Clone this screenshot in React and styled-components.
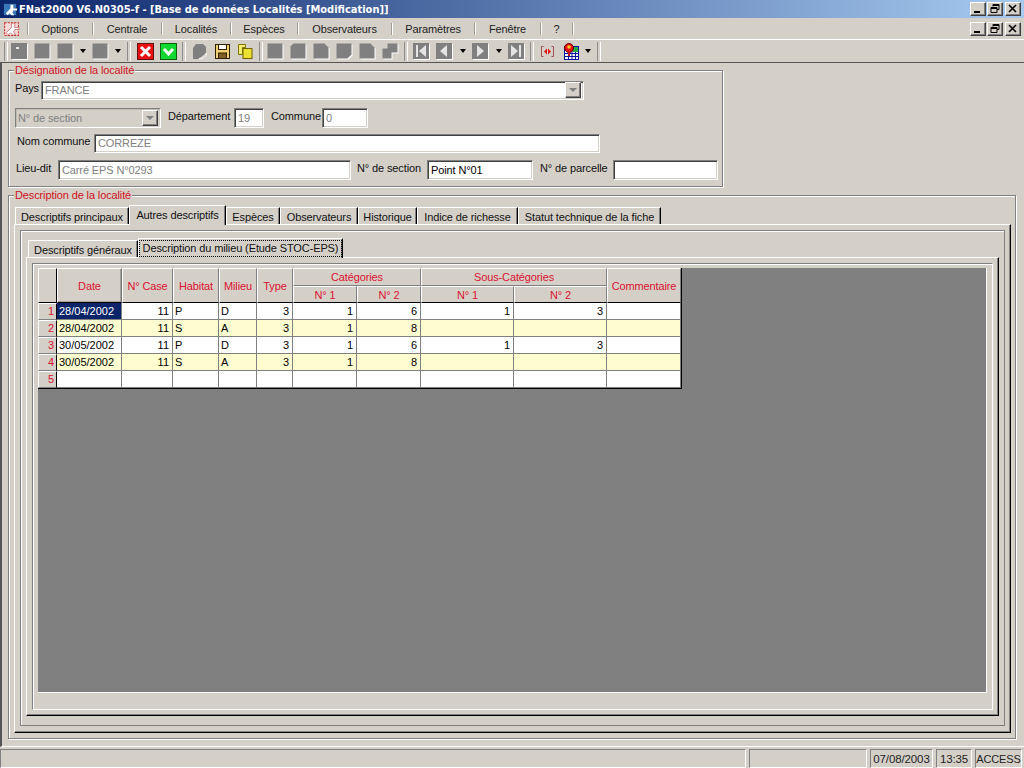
import React from 'react';
import styled, { createGlobalStyle } from 'styled-components';

const Global = createGlobalStyle`
  html, body { margin: 0; padding: 0; background: #d4d0c8; }
  * { box-sizing: border-box; }
  body { font-family: "Liberation Sans", Arial, sans-serif; font-size: 11px; letter-spacing: -0.12px; color: #000; }
`;
const Page = styled.div`width:1024px;height:768px;display:flex;flex-direction:column;overflow:hidden;background:#d4d0c8;`;
const TitleBar = styled.div`height:18px;display:flex;align-items:center;padding:0 3px 0 3px;background:linear-gradient(90deg,#0a246a,#a6caf0);color:#fff;font:bold 11px "DejaVu Sans Condensed","DejaVu Sans",sans-serif;letter-spacing:0;`;
const TitleText = styled.span`flex:1;margin-left:1px;white-space:nowrap;`;
const WinBtns = styled.div`display:flex;gap:1px;`;
const WinBtn = styled.button`width:16px;height:14px;padding:0;margin-left:${p=>p.$close?'1px':'0'};display:flex;align-items:center;justify-content:center;background:#d4d0c8;border:1px solid;border-color:#fff #404040 #404040 #fff;box-shadow:inset -1px -1px 0 #808080;`;
const MenuBar = styled.div`height:21px;display:flex;align-items:center;padding:0 3px 0 3px;`;
const MenuLogo = styled.div`width:25px;height:18px;display:flex;align-items:center;`;
const MenuItem = styled.div`width:${p=>p.$w}px;height:12px;display:flex;align-items:center;justify-content:center;padding-right:2px;border-left:1px solid #fff;box-shadow:-1px 0 0 #a09c94;font-size:11px;color:#222;white-space:nowrap;`;
const MenuFill = styled.div`flex:1;`;
const Toolbar = styled.div`height:24px;display:flex;align-items:center;padding-left:3px;border-top:1px solid #fff;border-bottom:1px solid #555;`;
const Grip = styled.div`width:5px;height:18px;display:flex;justify-content:center;`;
const Sep = styled.div`width:${p=>p.$w}px;height:19px;display:flex;justify-content:center;&::after{content:"";width:2px;height:100%;border-left:1px solid #8c8c8c;border-right:1px solid #fff;}`;
const Tool = styled.div`width:${p=>p.$w||23}px;height:20px;display:flex;align-items:center;justify-content:center;flex:none;`;
const Caret = styled.div`width:0;height:0;border-left:3.5px solid transparent;border-right:3.5px solid transparent;border-top:4px solid #000;`;
const Main = styled.div`flex:1;display:flex;flex-direction:column;gap:8px;padding:7px 8px 7px 6px;border-left:2px solid #555;border-bottom:1px solid #fff;min-height:0;`;
const Group = styled.section`position:relative;flex:${p=>p.$grow?1:'none'};width:${p=>p.$w}px;height:${p=>p.$h?p.$h+'px':'auto'};min-height:0;display:flex;flex-direction:column;padding:${p=>p.$pad};border:1px solid #808080;box-shadow:inset 1px 1px 0 #fff,1px 1px 0 #fff;`;
const Legend = styled.div`position:absolute;left:5px;top:-7px;padding:0 1px;background:#d4d0c8;color:#d01020;font-size:11px;line-height:13px;`;
const Row = styled.div`display:flex;align-items:center;height:${p=>p.$h||20}px;margin-top:${p=>p.$mt||0}px;padding-left:${p=>p.$pl||0}px;`;
const Label = styled.span`width:${p=>p.$w}px;flex:none;margin-left:${p=>p.$ml||0}px;padding-bottom:5px;white-space:nowrap;color:#111;`;
const InputBox = styled.div`width:${p=>p.$w}px;height:100%;flex:none;display:flex;align-items:center;padding:0 0 1px ${p=>p.$flat?2:3}px;background:${p=>p.$flat?'#d4d0c8':'#fff'};border:1px solid;border-color:#808080 #fff #fff #808080;box-shadow:${p=>p.$flat?'inset 1px 1px 0 #c0bcb4':'inset 1px 1px 0 #404040,inset -1px -1px 0 #d4d0c8'};color:${p=>p.$on?'#000':'#808080'};white-space:nowrap;`;
const InputText = styled.span`flex:1;`;
const Drop = styled.div`width:16px;height:16px;margin:0 2px 0 0;display:flex;align-items:center;justify-content:center;background:#d4d0c8;border:1px solid;border-color:#fff #404040 #404040 #fff;box-shadow:inset -1px -1px 0 #808080;&::after{content:"";border-left:4px solid transparent;border-right:4px solid transparent;border-top:4px solid #808080;}`;
const Tabs = styled.div`display:flex;align-items:flex-end;height:19px;padding-left:${p=>p.$pl||0}px;flex:none;`;
const Tab = styled.div`position:relative;z-index:${p=>p.$on?2:0};width:${p=>p.$w}px;flex:none;height:${p=>p.$on?20:17}px;display:flex;align-items:center;justify-content:center;margin-bottom:${p=>p.$on?-1:0}px;padding:${p=>p.$on?'0 0 1px':'1px 0 0'};background:#d4d0c8;border-top:1px solid #fff;border-left:1px solid #fff;border-right:1px solid #000;box-shadow:inset -1px 0 0 #808080;white-space:nowrap;color:#111;`;
const Focus = styled.span`width:100%;height:17px;display:flex;align-items:center;justify-content:center;outline:1px dotted #000;outline-offset:-1px;`;
const Panel = styled.div`position:relative;flex:1;min-height:0;display:flex;flex-direction:column;padding:${p=>p.$pad};background:#d4d0c8;border:1px solid;border-color:#fff #000 #000 #fff;box-shadow:inset -1px -1px 0 #808080;`;
const Frame = styled.div`flex:1;min-height:0;display:flex;flex-direction:column;padding:${p=>p.$pad};border:1px solid;border-color:#808080 ${p=>p.$light?'#fff #fff':'#808080 #808080'} #808080;box-shadow:inset 1px 1px 0 #fff;`;
const GridArea = styled.div`flex:1;min-height:0;background:#808080;border-right:1px solid #fff;border-bottom:1px solid #fff;`;
const Table = styled.table`width:644px;table-layout:fixed;border-collapse:separate;border-spacing:0;font-size:11px;border-right:1px solid #000;border-bottom:1px solid #000;`;
const Head = styled.th`height:${p=>p.$h||18}px;padding:0;font-weight:normal;color:#dc1030;background:#d4d0c8;border:1px solid;border-color:#fff #808080 ${p=>p.$last?'#000':'#808080'} #fff;`;
const DateHead = styled(Head)`border-color:#fff #707070 #000 #fff;box-shadow:inset -1px -1px 0 #a8a49c;`;
const Corner = styled.th`padding:0;background:#d4d0c8;border:1px solid;border-color:#fff #000 #000 #fff;`;
const RowNum = styled.th`height:17px;padding:0 2px 1px 0;text-align:right;font-weight:normal;color:#dc1030;background:#d4d0c8;border:1px solid;border-color:#fff #000 #808080 #fff;`;
const Cell = styled.td`height:17px;padding:0 ${p=>p.$right?'3px':'2px'} 1px;text-align:${p=>p.$right?'right':'left'};letter-spacing:0;color:${p=>p.$sel?'#fff':'#000'};background:${p=>p.$sel?'#0a246a':p.$alt?'#fdfdd0':'#fff'};border-right:1px solid #808080;border-bottom:1px solid #808080;overflow:hidden;white-space:nowrap;`;
const StatusBar = styled.div`height:21px;display:flex;align-items:stretch;padding:2px 2px 0 0;gap:3px;`;
const StatusCell = styled.div`width:${p=>p.$w?p.$w+'px':'auto'};flex:${p=>p.$w?'none':1};display:flex;align-items:center;justify-content:center;font-size:${p=>p.$fs||11.5}px;border:1px solid;border-color:#808080 #fff #fff #808080;color:#222;`;

const Logo = ({ blue }) => (
  <svg width={blue ? 15 : 17} height={blue ? 15 : 17} viewBox="0 0 16 16">
    {blue ? <rect x="1" y="2" width="13" height="12" fill="#3a79b8" /> : <rect x="1.5" y="2.5" width="13" height="12" fill="#f4d8d8" stroke="#c83030" strokeDasharray="2 1" />}
    <path d="M3 12 8 7V3h3v4h4v2h-4l-1 2 2 3H9l-2-2-2 2z" fill="#fff" stroke={blue ? 'none' : '#b03030'} strokeWidth=".5" />
  </svg>
);
const WinIcon = ({ t }) => (
  <svg width="10" height="10" viewBox="0 0 10 10">
    {t === 'min' && <rect x="1" y="7" width="6" height="2" fill="#000" />}
    {t === 'res' && <path d="M3 .5h6v5H7M3 .5v2M3 1.5h6M1 3.5h6v5H1zM1 4.5h6" fill="none" stroke="#000" />}
    {t === 'x' && <path d="M1 1l7 7M8 1L1 8" stroke="#000" strokeWidth="1.6" />}
  </svg>
);
const gray = '#808080';
const Shape = ({ d = 'M0 0h15v15H0z' }) => (
  <svg width="17" height="17" viewBox="-.5 -.5 17 17">
    <path d={d} fill="#fff" transform="translate(1 1)" />
    <path d={d} fill={gray} />
  </svg>
);
const Dot = () => (
  <svg width="17" height="17" viewBox="0 0 17 17"><rect x="1" y="1" width="16" height="16" fill="#fff"/><rect width="16" height="16" fill={gray}/><rect x="5" y="4" width="3" height="2" fill="#e8e8e8"/></svg>
);
const RedX = () => (
  <svg width="17" height="17" viewBox="0 0 17 17"><rect x=".5" y=".5" width="16" height="16" fill="#e81010" stroke="#601010"/><path d="M4 4l9 9M13 4l-9 9" stroke="#fff" strokeWidth="3"/></svg>
);
const GreenV = () => (
  <svg width="17" height="17" viewBox="0 0 17 17"><rect x=".5" y=".5" width="16" height="16" fill="#10d830" stroke="#106010"/><path d="M4 6l4.500 5L13 6" fill="none" stroke="#fff" strokeWidth="3"/></svg>
);
const Blob = () => (
  <svg width="17" height="17" viewBox="0 0 17 17"><path d="M2 5l3-4h7l3 3v6l-5 4-3 2H2z" fill={gray}/><path d="M15 10c1 3-3 6-7 6" stroke="#fff" fill="none"/></svg>
);
const Floppy = () => (
  <svg width="15" height="15" viewBox="0 0 15 15"><rect x=".5" y=".5" width="14" height="14" fill="#f0d070" stroke="#302000"/><rect x="3.500" y=".5" width="8" height="5" fill="#fff" stroke="#302000"/><rect x="3.500" y="9" width="8" height="5.500" fill="#806020" stroke="#302000"/></svg>
);
const Copy = () => (
  <svg width="15" height="15" viewBox="0 0 15 15"><path d="M.5.500h7v3h-3v7h-4z" fill="#f4ee70" stroke="#807000"/><rect x="5" y="4.500" width="9" height="10" fill="#ece030" stroke="#706000"/></svg>
);
const Nav = ({ kind }) => (
  <svg width="17" height="17" viewBox="0 0 17 17">
    <rect x="1" y="1" width="16" height="16" fill="#fff"/><rect width="16" height="16" fill={gray}/>
    {kind === 'first' && <path d="M3 2h2v12H3zM13 2v12L6 8z" fill="#e4e4e4"/>}
    {kind === 'prev' && <path d="M11 2v12L4 8z" fill="#e4e4e4"/>}
    {kind === 'next' && <path d="M5 2v12l7-6z" fill="#e4e4e4"/>}
    {kind === 'last' && <path d="M11 2h2v12h-2zM3 2v12l7-6z" fill="#e4e4e4"/>}
  </svg>
);
const Link = () => (
  <svg width="15" height="15" viewBox="0 0 15 15"><path d="M3.500 2.500h-2v10h2M11.500 2.500h2v10h-2" fill="none" stroke="#a05050"/><path d="M7 4.500v6L4 7.500zM8 4.500v6l3-3z" fill="#e81010"/></svg>
);
const MapIcon = () => (
  <svg width="18" height="17" viewBox="0 0 18 17"><rect x="2.500" y="3.500" width="14" height="13" fill="#fff" stroke="#0818a0"/><path d="M2 7.500h15M2 10.500h15M2 13.500h15M6.500 3v14M10 3v14M13.500 3v14" stroke="#0818a0"/><rect x="11" y="4" width="5" height="5" fill="#20b040"/><circle cx="7" cy="5" r="4.500" fill="#e81010" stroke="#600"/><circle cx="7" cy="4" r="1.800" fill="#f4d020"/><path d="M7 9v4" stroke="#c01010" strokeWidth="2"/></svg>
);
const Notch = { a: 'M3 0h12v15H0V3z', b: 'M0 0h11l4 4v11H0z', c: 'M0 0h15v11l-4 4H0z' };

const menus = [['Options', 65], ['Centrale', 69], ['Localités', 69], ['Espèces', 67], ['Observateurs', 94], ['Paramètres', 83], ['Fenêtre', 66], ['?', 32]];
const rows = [
  ['28/04/2002', 'P', 'D', '1', '6', '1', '3'],
  ['28/04/2002', 'S', 'A', '1', '8', '', ''],
  ['30/05/2002', 'P', 'D', '1', '6', '1', '3'],
  ['30/05/2002', 'S', 'A', '1', '8', '', ''],
];
const colWidths = [19, 65, 51, 46, 38, 36, 64, 64, 93, 93, 74];

const WinControls = () => (
  <WinBtns>
    <WinBtn><WinIcon t="min" /></WinBtn>
    <WinBtn><WinIcon t="res" /></WinBtn>
    <WinBtn $close><WinIcon t="x" /></WinBtn>
  </WinBtns>
);

export default function App() {
  return (
    <Page>
      <Global />
      <TitleBar>
        <Logo blue />
        <TitleText>FNat2000 V6.N0305-f - [Base de données Localités [Modification]]</TitleText>
        <WinControls />
      </TitleBar>
      <MenuBar>
        <MenuLogo><Logo /></MenuLogo>
        {menus.map(([m, w]) => <MenuItem key={m} $w={w}>{m}</MenuItem>)}
        <MenuItem $w={1} />
        <MenuFill />
        <WinControls />
      </MenuBar>
      <Toolbar>
        <Grip><Sep $w={5} /></Grip>
        <Tool><Dot /></Tool><Tool><Shape /></Tool><Tool><Shape /></Tool>
        <Tool $w={12}><Caret /></Tool>
        <Tool><Shape /></Tool>
        <Tool $w={12}><Caret /></Tool>
        <Sep $w={10} />
        <Tool><RedX /></Tool><Tool><GreenV /></Tool>
        <Sep $w={8} />
        <Tool><Blob /></Tool><Tool><Floppy /></Tool><Tool><Copy /></Tool>
        <Sep $w={7} />
        <Tool><Shape /></Tool><Tool><Shape d={Notch.a} /></Tool><Tool><Shape d={Notch.b} /></Tool><Tool><Shape d={Notch.c} /></Tool><Tool><Shape d={Notch.b} /></Tool><Tool><Shape d="M5 0h10v9H9v6H0V5h5z" /></Tool>
        <Sep $w={8} />
        <Tool><Nav kind="first" /></Tool><Tool><Nav kind="prev" /></Tool>
        <Tool $w={13}><Caret /></Tool>
        <Tool><Nav kind="next" /></Tool>
        <Tool $w={13}><Caret /></Tool>
        <Tool><Nav kind="last" /></Tool>
        <Sep $w={8} />
        <Tool><Link /></Tool><Tool><MapIcon /></Tool>
        <Tool $w={11}><Caret /></Tool>
        <Sep $w={12} />
      </Toolbar>
      <Main>
        <Group $w={715} $h={117} $pad="10px 0 0 6px">
          <Legend>Désignation de la localité</Legend>
          <Row $h={19}>
            <Label $w={26}>Pays</Label>
            <InputBox $w={543}><InputText>FRANCE</InputText><Drop /></InputBox>
          </Row>
          <Row $mt={8}>
            <InputBox $w={146} $flat><InputText>N° de section</InputText><Drop /></InputBox>
            <Label $ml={7} $w={66}>Département</Label>
            <InputBox $w={30}>19</InputBox>
            <Label $ml={7} $w={51}>Commune</Label>
            <InputBox $w={46}>0</InputBox>
          </Row>
          <Row $mt={6} $h={19} $pl={2}>
            <Label $w={77}>Nom commune</Label>
            <InputBox $w={506}>CORREZE</InputBox>
          </Row>
          <Row $mt={7} $pl={1}>
            <Label $w={42}>Lieu-dit</Label>
            <InputBox $w={293}>Carré EPS N°0293</InputBox>
            <Label $ml={6} $w={70}>N° de section</Label>
            <InputBox $w={106} $on>Point N°01</InputBox>
            <Label $ml={7} $w={73}>N° de parcelle</Label>
            <InputBox $w={105} $on />
          </Row>
        </Group>
        <Group $grow $w={1008} $pad="9px 4px 5px 5px">
          <Legend>Description de la localité</Legend>
          <Tabs $pl={1}>
            <Tab $w={114}>Descriptifs principaux</Tab>
            <Tab $w={97} $on>Autres descriptifs</Tab>
            <Tab $w={54}>Espèces</Tab>
            <Tab $w={78}>Observateurs</Tab>
            <Tab $w={59}>Historique</Tab>
            <Tab $w={101}>Indice de richesse</Tab>
            <Tab $w={143}>Statut technique de la fiche</Tab>
          </Tabs>
          <Panel $pad="5px 5px 6px 5px">
            <Frame $pad="7px 5px 9px 5px">
              <Tabs $pl={2}>
                <Tab $w={110}>Descriptifs généraux</Tab>
                <Tab $w={205} $on><Focus>Description du milieu (Etude STOC-EPS)</Focus></Tab>
              </Tabs>
              <Panel $pad="5px 5px 5px 5px">
                <Frame $light $pad="4px 5px 16px 5px">
                  <GridArea>
                    <Table>
                      <colgroup>{colWidths.map((w, i) => <col key={i} style={{ width: w }} />)}</colgroup>
                      <thead>
                        <tr>
                          <Corner rowSpan={2} />
                          <DateHead rowSpan={2}>Date</DateHead>
                          <Head rowSpan={2} $last>N° Case</Head>
                          <Head rowSpan={2} $last>Habitat</Head>
                          <Head rowSpan={2} $last>Milieu</Head>
                          <Head rowSpan={2} $last>Type</Head>
                          <Head colSpan={2}>Catégories</Head>
                          <Head colSpan={2}>Sous-Catégories</Head>
                          <Head rowSpan={2} $last>Commentaire</Head>
                        </tr>
                        <tr>
                          <Head $last $h={17}>N° 1</Head><Head $last $h={17}>N° 2</Head><Head $last $h={17}>N° 1</Head><Head $last $h={17}>N° 2</Head>
                        </tr>
                      </thead>
                      <tbody>
                        {rows.map((r, i) => {
                          const alt = i % 2 === 1;
                          return (
                            <tr key={i}>
                              <RowNum>{i + 1}</RowNum>
                              <Cell $alt={alt} $sel={i === 0}>{r[0]}</Cell>
                              <Cell $alt={alt} $right>11</Cell>
                              <Cell $alt={alt}>{r[1]}</Cell>
                              <Cell $alt={alt}>{r[2]}</Cell>
                              <Cell $alt={alt} $right>3</Cell>
                              <Cell $alt={alt} $right>{r[3]}</Cell>
                              <Cell $alt={alt} $right>{r[4]}</Cell>
                              <Cell $alt={alt} $right>{r[5]}</Cell>
                              <Cell $alt={alt} $right>{r[6]}</Cell>
                              <Cell $alt={alt} />
                            </tr>
                          );
                        })}
                        <tr>
                          <RowNum>5</RowNum>
                          {colWidths.slice(1).map((_, i) => <Cell key={i} />)}
                        </tr>
                      </tbody>
                    </Table>
                  </GridArea>
                </Frame>
              </Panel>
            </Frame>
          </Panel>
        </Group>
      </Main>
      <StatusBar>
        <StatusCell $w={746} />
        <StatusCell />
        <StatusCell $w={63}>07/08/2003</StatusCell>
        <StatusCell $w={36}>13:35</StatusCell>
        <StatusCell $w={47} $fs={11}>ACCESS</StatusCell>
      </StatusBar>
    </Page>
  );
}
